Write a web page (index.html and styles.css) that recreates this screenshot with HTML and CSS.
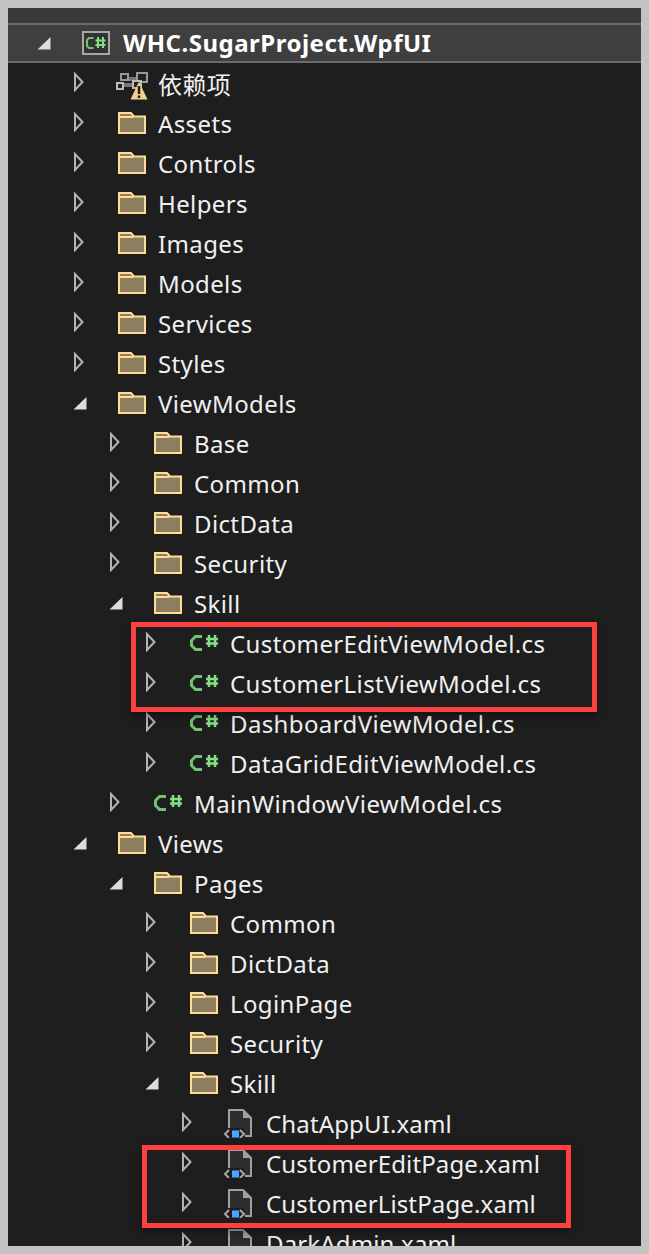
FILE: index.html
```html
<!DOCTYPE html>
<html lang="zh">
<head>
<meta charset="utf-8">
<title>Solution Explorer</title>
<link rel="stylesheet" href="styles.css">
</head>
<body>
<svg class="defs" width="0" height="0" aria-hidden="true">
  <symbol id="closed" viewBox="0 0 16 20"><path d="M3 2 V18 L10.5 10 Z" fill="none" stroke="#b4b4b4" stroke-width="2"/></symbol>
  <symbol id="open" viewBox="0 0 16 20"><path d="M1.5 17.5 H14.5 V5 Z" fill="#dcdcdc"/></symbol>
  <symbol id="folder" viewBox="0 0 28 22"><path d="M1 21 V1 H13 L16 4.5 H27 V21 Z" fill="#8c7e5e" stroke="#ffdc96" stroke-width="2"/><path d="M1 5 H15" stroke="#ffdc96" stroke-width="2"/></symbol>
  <symbol id="cs" viewBox="0 0 28 20"><path d="M12 3.500 H5.500 L1.500 7.500 V12.500 L5.500 16.500 H12" fill="none" stroke="#73bf73" stroke-width="3"/><path d="M19 2 V14 M25 2 V14 M16 6 H28 M16 10.500 H28" fill="none" stroke="#82e082" stroke-width="2.500"/></symbol>
  <symbol id="project" viewBox="0 0 28 24"><rect x="1" y="1" width="26" height="22" fill="#333" stroke="#a8a8a8" stroke-width="2"/><path d="M11.500 7 H7 L5 9 V15 L7 17 H11.500" fill="none" stroke="#73bf73" stroke-width="2"/><path d="M16 6 V17 M21 6 V17 M13.500 9.500 H23.500 M13.500 14 H23.500" fill="none" stroke="#82e082" stroke-width="2"/></symbol>
  <symbol id="deps" viewBox="0 0 32 28"><path d="M8 7 H22 M6 13 H16" stroke="#777" stroke-width="4"/><rect x="1" y="11" width="6" height="6" fill="#222" stroke="#bcbcbc" stroke-width="2"/><rect x="5" y="2" width="7" height="6" fill="#222" stroke="#999" stroke-width="2"/><rect x="21" y="1" width="10" height="9" fill="#222" stroke="#999" stroke-width="2"/><rect x="17" y="9" width="8" height="7" fill="#222" stroke="#bbb" stroke-width="2"/><path d="M23 9.500 L31.500 27.500 H14.500 Z" fill="#f2d28c"/><path d="M23 14 V22 M23 23.500 V26" stroke="#1e1e1e" stroke-width="2.500"/></symbol>
  <symbol id="xaml" viewBox="0 0 29 29"><path d="M6 21 V1 H20 L28 9 V27 H22" fill="#2d2d2d" stroke="#a0a0a0" stroke-width="2"/><path d="M20 1 V9 H28 Z" fill="#a0a0a0"/><rect x="3" y="19" width="18.500" height="10" fill="#1e1e1e"/><path d="M6 21 L2 25 L6 29 M17 21 L21 25 L17 29" fill="none" stroke="#a8a8a8" stroke-width="2"/><rect x="9" y="21.500" width="7" height="7" fill="#4aa5ff"/></symbol>
</svg>
<main class="panel">
  <div class="strip"></div>
  <div class="row root l0"><svg class="arrow"><use href="#open"/></svg><svg class="icon proj"><use href="#project"/></svg><span class="name">WHC.SugarProject.WpfUI</span></div>
  <div class="row l1"><svg class="arrow"><use href="#closed"/></svg><svg class="icon dep"><use href="#deps"/></svg><span class="name">依赖项</span></div>
  <div class="row l1"><svg class="arrow"><use href="#closed"/></svg><svg class="icon"><use href="#folder"/></svg><span class="name">Assets</span></div>
  <div class="row l1"><svg class="arrow"><use href="#closed"/></svg><svg class="icon"><use href="#folder"/></svg><span class="name">Controls</span></div>
  <div class="row l1"><svg class="arrow"><use href="#closed"/></svg><svg class="icon"><use href="#folder"/></svg><span class="name">Helpers</span></div>
  <div class="row l1"><svg class="arrow"><use href="#closed"/></svg><svg class="icon"><use href="#folder"/></svg><span class="name">Images</span></div>
  <div class="row l1"><svg class="arrow"><use href="#closed"/></svg><svg class="icon"><use href="#folder"/></svg><span class="name">Models</span></div>
  <div class="row l1"><svg class="arrow"><use href="#closed"/></svg><svg class="icon"><use href="#folder"/></svg><span class="name">Services</span></div>
  <div class="row l1"><svg class="arrow"><use href="#closed"/></svg><svg class="icon"><use href="#folder"/></svg><span class="name">Styles</span></div>
  <div class="row l1"><svg class="arrow"><use href="#open"/></svg><svg class="icon"><use href="#folder"/></svg><span class="name">ViewModels</span></div>
  <div class="row l2"><svg class="arrow"><use href="#closed"/></svg><svg class="icon"><use href="#folder"/></svg><span class="name">Base</span></div>
  <div class="row l2"><svg class="arrow"><use href="#closed"/></svg><svg class="icon"><use href="#folder"/></svg><span class="name">Common</span></div>
  <div class="row l2"><svg class="arrow"><use href="#closed"/></svg><svg class="icon"><use href="#folder"/></svg><span class="name">DictData</span></div>
  <div class="row l2"><svg class="arrow"><use href="#closed"/></svg><svg class="icon"><use href="#folder"/></svg><span class="name">Security</span></div>
  <div class="row l2"><svg class="arrow"><use href="#open"/></svg><svg class="icon"><use href="#folder"/></svg><span class="name">Skill</span></div>
  <div class="row l3"><svg class="arrow"><use href="#closed"/></svg><svg class="icon"><use href="#cs"/></svg><span class="name">CustomerEditViewModel.cs</span></div>
  <div class="row l3"><svg class="arrow"><use href="#closed"/></svg><svg class="icon"><use href="#cs"/></svg><span class="name">CustomerListViewModel.cs</span></div>
  <div class="row l3"><svg class="arrow"><use href="#closed"/></svg><svg class="icon"><use href="#cs"/></svg><span class="name">DashboardViewModel.cs</span></div>
  <div class="row l3"><svg class="arrow"><use href="#closed"/></svg><svg class="icon"><use href="#cs"/></svg><span class="name">DataGridEditViewModel.cs</span></div>
  <div class="row l2"><svg class="arrow"><use href="#closed"/></svg><svg class="icon"><use href="#cs"/></svg><span class="name">MainWindowViewModel.cs</span></div>
  <div class="row l1"><svg class="arrow"><use href="#open"/></svg><svg class="icon"><use href="#folder"/></svg><span class="name">Views</span></div>
  <div class="row l2"><svg class="arrow"><use href="#open"/></svg><svg class="icon"><use href="#folder"/></svg><span class="name">Pages</span></div>
  <div class="row l3"><svg class="arrow"><use href="#closed"/></svg><svg class="icon"><use href="#folder"/></svg><span class="name">Common</span></div>
  <div class="row l3"><svg class="arrow"><use href="#closed"/></svg><svg class="icon"><use href="#folder"/></svg><span class="name">DictData</span></div>
  <div class="row l3"><svg class="arrow"><use href="#closed"/></svg><svg class="icon"><use href="#folder"/></svg><span class="name">LoginPage</span></div>
  <div class="row l3"><svg class="arrow"><use href="#closed"/></svg><svg class="icon"><use href="#folder"/></svg><span class="name">Security</span></div>
  <div class="row l3"><svg class="arrow"><use href="#open"/></svg><svg class="icon"><use href="#folder"/></svg><span class="name">Skill</span></div>
  <div class="row l4"><svg class="arrow"><use href="#closed"/></svg><svg class="icon doc"><use href="#xaml"/></svg><span class="name">ChatAppUI.xaml</span></div>
  <div class="row l4"><svg class="arrow"><use href="#closed"/></svg><svg class="icon doc"><use href="#xaml"/></svg><span class="name">CustomerEditPage.xaml</span></div>
  <div class="row l4"><svg class="arrow"><use href="#closed"/></svg><svg class="icon doc"><use href="#xaml"/></svg><span class="name">CustomerListPage.xaml</span></div>
  <div class="row l4"><svg class="arrow"><use href="#closed"/></svg><svg class="icon doc"><use href="#xaml"/></svg><span class="name">DarkAdmin.xaml</span></div>
  <div class="mark mark-cs"></div>
  <div class="mark mark-xaml"></div>
</main>
</body>
</html>
```
FILE: styles.css
```css
html, body {
  margin: 0;
  height: 100%;
  background: #c3c3c3;
}
body {
  padding: 8px;
  box-sizing: border-box;
  overflow: hidden;
}
.defs {
  position: absolute;
}
.panel {
  position: relative;
  height: 1238px;
  overflow: hidden;
  background: #1e1e1e;
  font-family: "Noto Sans", "Noto Sans CJK SC", sans-serif;
  font-size: 24px;
  letter-spacing: 0.38px;
  color: #f0f0f0;
}
.strip {
  height: 15px;
  box-sizing: border-box;
  background: #1e1e1e;
  border-top: 11px solid #3a3a3a;
  box-shadow: inset 0 9px 0 #3a3a3a;
}
.row {
  height: 40px;
  display: flex;
  align-items: center;
  box-sizing: border-box;
  white-space: nowrap;
}
.root {
  height: 40px;
  background: #3f3f3f;
  border-top: 2px solid #6b6b6b;
  border-bottom: 2px solid #6b6b6b;
  font-weight: 700;
  letter-spacing: 0.5px;
  color: #fff;
}
.l0 { padding-left: 28px; }
.l1 { padding-left: 64px; }
.l2 { padding-left: 100px; }
.l3 { padding-left: 136px; }
.l4 { padding-left: 172px; letter-spacing: 0.14px; }
.arrow {
  flex: none;
  width: 16px;
  height: 20px;
  margin-right: 30px;
  margin-top: -2px;
}
.icon {
  flex: none;
  width: 28px;
  height: 22px;
  margin-right: 13px;
}
.icon.doc {
  width: 29px;
  height: 29px;
  margin-left: -3px;
  margin-right: 15px;
}
.icon.proj {
  height: 24px;
}
.icon.dep {
  width: 32px;
  height: 28px;
  margin-left: -2px;
  margin-right: 11px;
  margin-top: 5px;
}
.name {
  position: relative;
  left: -1px;
}
.root .name {
  top: -1px;
  left: 0;
}
.mark {
  position: absolute;
  box-sizing: border-box;
  border: 5px solid #ff4040;
  box-shadow: 0 4px 8px rgba(0, 0, 0, 0.35);
}
.mark-cs {
  left: 123px;
  top: 614px;
  width: 466px;
  height: 90px;
}
.mark-xaml {
  left: 134px;
  top: 1137px;
  width: 429px;
  height: 83px;
}
```
